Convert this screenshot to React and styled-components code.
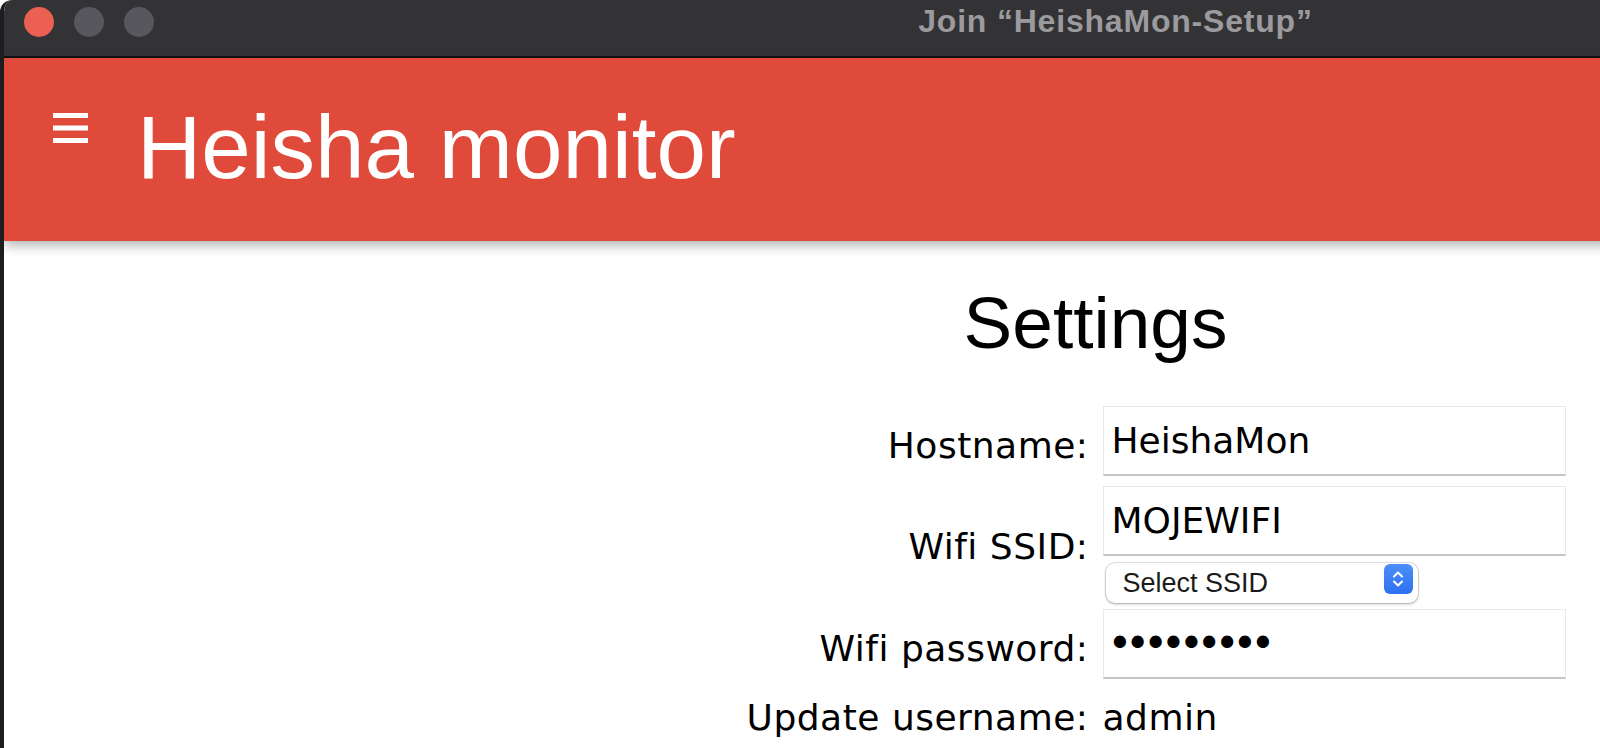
import React from "react";
import styled, { createGlobalStyle } from "styled-components";

const GlobalStyle = createGlobalStyle`
  html, body {
    margin: 0;
    padding: 0;
    background: #ffffff;
    overflow: hidden;
  }
  * {
    box-sizing: border-box;
  }
`;

// the browser window is wider than what fits on screen
const Window = styled.div`
  width: 2227px;
  min-height: 748px;
  background: #ffffff;
  border-left: 4px solid #1d1d1f;
  border-top-left-radius: 12px;
  overflow: hidden;
`;

const TitleBar = styled.div`
  display: grid;
  grid-template-columns: 1fr auto 1fr;
  height: 58px;
  background: #333335;
  border-bottom: 2px solid #111112;
`;

const Lights = styled.div`
  display: flex;
  gap: 20px;
  padding: 7px 0 0 20px;
`;

const Light = styled.span`
  width: 30px;
  height: 30px;
  border-radius: 50%;
  background: ${(p) => (p.$close ? "#ec5f53" : "#58575d")};
`;

const WindowTitle = styled.div`
  padding-top: 1px;
  font-family: "Liberation Sans", Arial, sans-serif;
  font-weight: 700;
  font-size: 32px;
  line-height: 40px;
  letter-spacing: 0.8px;
  color: #9b9a9f;
  white-space: nowrap;
`;

const Header = styled.header`
  position: relative;
  z-index: 1;
  display: flex;
  align-items: flex-start;
  gap: 49px;
  height: 183px;
  padding: 38px 0 0 49px;
  background: #df4a3b;
  box-shadow: 0 4px 12px rgba(0, 0, 0, 0.32);
`;

const MenuIcon = styled.svg`
  margin-top: 17px;
  flex-shrink: 0;
`;

const Brand = styled.h1`
  margin: 0;
  font-family: "Liberation Sans", Arial, sans-serif;
  font-weight: 400;
  font-size: 89px;
  line-height: normal;
  color: #ffffff;
`;

const Main = styled.main`
  padding: 40px 40px 0 0;
`;

const PageTitle = styled.h2`
  margin: 0 0 42px;
  text-align: center;
  font-family: "Liberation Sans", Arial, sans-serif;
  font-weight: 400;
  font-size: 73px;
  line-height: normal;
  color: #000000;
`;

const Form = styled.div`
  display: grid;
  grid-template-columns: 1fr 1fr;
  column-gap: 14px;
  row-gap: 10px;
  align-items: center;
  font-family: "DejaVu Sans", Verdana, sans-serif;
  font-size: 36px;
  color: #000000;
`;

const Label = styled.label`
  padding-top: 8px;
  text-align: right;
  line-height: normal;
  letter-spacing: 0.5px;
  white-space: nowrap;
`;

const Value = styled.div`
  display: flex;
  flex-direction: column;
  align-items: flex-start;
  gap: 3px;
  padding-top: ${(p) => (p.$text ? "8px" : "0")};
  line-height: normal;
  letter-spacing: ${(p) => (p.$text ? "0.5px" : "normal")};
`;

const TextInput = styled.input`
  width: 463px;
  height: 70px;
  padding: 0 8px;
  border: 1px solid #e9e9e9;
  border-bottom: 2px solid #c6c6c6;
  border-radius: 0;
  outline: none;
  background: #ffffff;
  font-family: "DejaVu Sans", Verdana, sans-serif;
  font-size: 36px;
  color: #000000;
`;

// masked value: bullets a bit larger and tighter than the text font
const PasswordInput = styled(TextInput)`
  padding-left: 4px;
  font-size: 42px;
  letter-spacing: -6.9px;
`;

const SelectWrap = styled.div`
  position: relative;
  margin-left: 3px;
  width: 312px;
  height: 40px;
`;

const Select = styled.select`
  width: 100%;
  height: 100%;
  padding: 0 0 0 17px;
  appearance: none;
  border: none;
  border-radius: 9px;
  outline: none;
  background: #ffffff;
  box-shadow: 0 0 0 1px rgba(0, 0, 0, 0.1), 0 1px 3px rgba(0, 0, 0, 0.28);
  font-family: "Liberation Sans", Arial, sans-serif;
  font-size: 27px;
  color: #1b1b1b;
`;

// blue up/down stepper drawn over the select's right end
const Stepper = styled.span`
  position: absolute;
  top: 5px;
  right: 5px;
  display: flex;
  align-items: center;
  justify-content: center;
  width: 29px;
  height: 30px;
  border-radius: 6px;
  background: linear-gradient(#4c8ff9, #2d71f0);
  pointer-events: none;
`;

const Menu = () => (
  <MenuIcon width="35" height="30" viewBox="0 0 35 30">
    <rect x="0" y="0" width="35" height="5" fill="#ffffff" />
    <rect x="0" y="12.5" width="35" height="5" fill="#ffffff" />
    <rect x="0" y="25" width="35" height="5" fill="#ffffff" />
  </MenuIcon>
);

const Chevrons = () => (
  <svg width="14" height="20" viewBox="0 0 14 20" fill="none">
    <path d="M3 7.5 L7 3.5 L11 7.5" stroke="#ffffff" strokeWidth="2" strokeLinecap="round" strokeLinejoin="round" />
    <path d="M3 12.5 L7 16.5 L11 12.5" stroke="#ffffff" strokeWidth="2" strokeLinecap="round" strokeLinejoin="round" />
  </svg>
);

export default function App() {
  return (
    <>
      <GlobalStyle />
      <Window>
        <TitleBar>
          <Lights>
            <Light $close />
            <Light />
            <Light />
          </Lights>
          <WindowTitle>Join “HeishaMon-Setup”</WindowTitle>
          <div />
        </TitleBar>

        <Header>
          <Menu />
          <Brand>Heisha monitor</Brand>
        </Header>

        <Main>
          <PageTitle>Settings</PageTitle>
          <Form>
            <Label htmlFor="hostname">Hostname:</Label>
            <Value>
              <TextInput id="hostname" type="text" defaultValue="HeishaMon" />
            </Value>

            <Label htmlFor="ssid">Wifi SSID:</Label>
            <Value>
              <TextInput id="ssid" type="text" defaultValue="MOJEWIFI" />
              <SelectWrap>
                <Select defaultValue="">
                  <option value="">Select SSID</option>
                </Select>
                <Stepper>
                  <Chevrons />
                </Stepper>
              </SelectWrap>
            </Value>

            <Label htmlFor="wifipassword">Wifi password:</Label>
            <Value>
              <PasswordInput id="wifipassword" type="password" defaultValue="123456789" />
            </Value>

            <Label>Update username:</Label>
            <Value $text>admin</Value>
          </Form>
        </Main>
      </Window>
    </>
  );
}
